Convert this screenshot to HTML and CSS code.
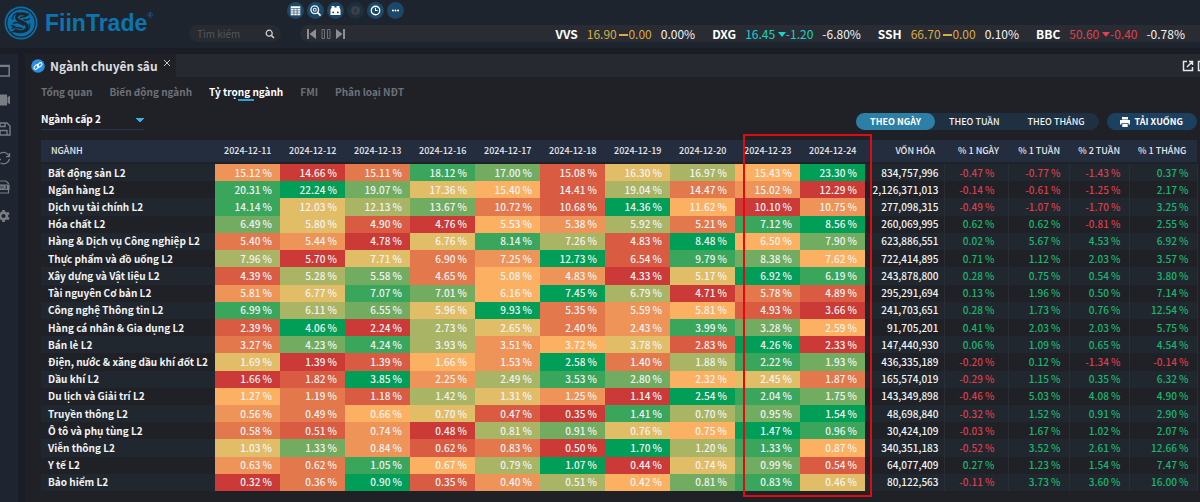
FILE: index.html
```html
<!DOCTYPE html>
<html lang="vi">
<head>
<meta charset="utf-8">
<meta name="viewport" content="width=device-width, initial-scale=1">
<title>FiinTrade - Ngành chuyên sâu</title>
<link rel="stylesheet" href="styles.css">
</head>
<body>
<header class="topbar">
  <a class="brand" href="#" aria-label="FiinTrade">
    <svg class="brand-mark" viewBox="0 0 34 34" aria-hidden="true">
      <circle cx="17" cy="17" r="16.5" fill="#0971aa"/>
      <circle cx="17" cy="17" r="14.2" fill="none" stroke="#1e242d" stroke-width="1.2"/>
      <g fill="none" stroke="#1e242d" stroke-linecap="round" stroke-linejoin="round">
        <path stroke-width="3" d="M22 8.500c-3.500-1.500-9-1-9.500 2.500-.4 3 3 4 5.500 5 3.500 1.500 6.500 3.500 4.500 7-2 3-7 3-11 1.500"/>
        <path stroke-width="1.500" d="M24.500 8c-1.500 3-5 2.500-8 3.500M8.500 13c0-3.500 2.500-6 6-6M9.500 17.500c3-2.500 7 0 10 1.500M8 22.500c2.500-2 7-.5 10 0M25.500 18c1 4-2 8-6.500 8M8 26c3-2 7 2 11 0M20 13.500c2 1 4 .5 5.500-1M7.500 19.500l3 1"/>
      </g>
    </svg>
    <span class="brand-name">FiinTrade</span><span class="brand-reg">®</span>
  </a>
  <div class="topbar-body">
    <nav class="tools" aria-label="Công cụ">
      <button class="tool" type="button" aria-label="Bảng giá"><svg viewBox="0 0 16 16"><path fill="#fff" d="M3.500 4h9v8.500h-9z"/><path stroke="#1c4766" stroke-width=".6" d="M3.500 6.200h9M3.500 8.300h9M3.500 10.400h9M6.500 6v6.500M9.500 6v6.500"/></svg></button>
      <button class="tool" type="button" aria-label="Tìm cổ phiếu"><svg viewBox="0 0 16 16" fill="none" stroke="#e8f0f6"><circle cx="7.300" cy="7.300" r="3.600" stroke-width="1.300"/><circle cx="7.300" cy="7.300" r="1.400"/><path stroke-width="1.800" d="m10 10 2.800 2.800"/></svg></button>
      <button class="tool" type="button" aria-label="Quan sát"><svg viewBox="0 0 16 16"><path fill="#fff" d="M4.300 3.800h2.700v1.400h2V3.800h2.700v1.500l1 1.700v5.200H3.300V7l1-1.700z"/><circle cx="5.800" cy="9.800" r=".9" fill="#1c4766"/><circle cx="10.200" cy="9.800" r=".9" fill="#1c4766"/></svg></button>
      <button class="tool tool-off" type="button" disabled aria-label="Thông báo"><svg viewBox="0 0 16 16"><circle cx="8" cy="8" r="4.200" fill="#3c4148"/><path stroke="#26303b" d="M8 5.500v5M6.500 8h3"/></svg></button>
      <button class="tool" type="button" aria-label="Lịch sử"><svg viewBox="0 0 16 16" fill="none" stroke="#fff"><circle cx="8" cy="8" r="4" stroke-width="1.200"/><path d="M8 5.500V8h2"/></svg></button>
      <button class="tool" type="button" aria-label="Thêm"><svg viewBox="0 0 16 16" fill="#fff"><circle cx="5.600" cy="8" r=".9"/><circle cx="8" cy="8" r=".9"/><circle cx="10.400" cy="8" r=".9"/></svg></button>
    </nav>
    <div class="topbar-line">
      <form class="search" role="search">
        <input class="search-input" type="search" placeholder="Tìm kiếm" aria-label="Tìm kiếm">
        <button class="bare" type="button" aria-label="Tìm"><svg width="10" height="10" viewBox="0 0 10 10" fill="none" stroke="#d8dadd"><circle cx="4.200" cy="4.200" r="3" stroke-width="1.200"/><path stroke-width="1.500" d="m6.500 6.500 2.500 2.500"/></svg></button>
      </form>
      <div class="ticker">
        <button class="bare" type="button" aria-label="Trước"><svg width="10" height="10" viewBox="0 0 10 10" fill="#8b8e93"><path d="M1 0h2v10H1zM10 0v10L3.500 5z"/></svg></button>
        <button class="bare" type="button" aria-label="Tạm dừng"><svg width="10" height="10" viewBox="0 0 10 10" fill="none" stroke="#6f7277"><path d="M1 .5h2.500v9H1zM6.500 .5H9v9H6.500z"/></svg></button>
        <button class="bare" type="button" aria-label="Sau"><svg width="10" height="10" viewBox="0 0 10 10" fill="#8b8e93"><path d="M0 0v10l6.500-5zM7 0h2v10H7z"/></svg></button>
        <ul class="quotes">
          <li class="quote"><b class="symbol">VVS</b><span class="flat">16.90 <i class="dash"></i>0.00</span><span>0.00%</span></li>
          <li class="quote"><b class="symbol">DXG</b><span class="floor">16.45 <i class="drop"></i>-1.20</span><span>-6.80%</span></li>
          <li class="quote"><b class="symbol">SSH</b><span class="flat">66.70 <i class="dash"></i>0.00</span><span>0.10%</span></li>
          <li class="quote"><b class="symbol">BBC</b><span class="loss">50.60 <i class="drop"></i>-0.40</span><span>-0.78%</span></li>
        </ul>
      </div>
    </div>
  </div>
</header>
<div class="workspace">
  <aside class="rail">
    <button class="bare" type="button" aria-label="Cửa sổ"><svg width="12" height="14" viewBox="0 0 12 14" fill="none" stroke="#7a7d83"><path stroke-width="1.500" d="M-4 1.500H9.200v10.500H-4z"/><path stroke-width="2" d="M-4 2h13"/></svg></button>
    <button class="bare" type="button" aria-label="Video"><svg width="12" height="14" viewBox="0 0 12 14" fill="#7a7d83"><path d="M0 1.500h7v11H0zM7.500 4 10 3v8L7.500 10z"/></svg></button>
    <button class="bare" type="button" aria-label="Lưu"><svg width="12" height="14" viewBox="0 0 12 14" fill="none" stroke="#7a7d83" stroke-width="1.400"><path d="M-4 1H7l3 3v9H-4zM0 1v3.500h5V1M0 13V8.500h7V13"/></svg></button>
    <button class="bare" type="button" aria-label="Làm mới"><svg width="12" height="14" viewBox="0 0 12 14" fill="none" stroke="#7a7d83" stroke-width="1.300"><path d="M0 2.500c4-2.500 8-.5 9 3M9.500 2v3.700H6M9.500 8c-1 4-5 6-9 4M-2 8.500h3"/></svg></button>
    <button class="bare" type="button" aria-label="Xuất tệp"><svg width="12" height="14" viewBox="0 0 12 14" fill="none" stroke="#7a7d83" stroke-width="1.200"><path d="M-3 4V1h9l2.500 2.500V4M-3 10v3H8.500v-3"/><path fill="#7a7d83" d="M-3 5H9v4.500H-3z"/><path stroke="#1e2530" stroke-width=".8" d="M1 6v2.500M3 6v2.500M5 6h1.500v2.500H5"/></svg></button>
    <button class="bare" type="button" aria-label="Cài đặt"><svg width="12" height="14" viewBox="0 0 12 14" fill="none" stroke="#7a7d83"><circle cx="3.500" cy="7" r="3.400" stroke-width="2.600"/><path stroke-width="2.600" d="M3.500 1v2M3.500 11v2M9 4 7 5M9 10 7 9"/></svg></button>
  </aside>
  <main class="panel">
    <div class="window-tabs">
      <div class="window-tab">
        <svg class="link-icon" viewBox="0 0 14 14" fill="none" stroke="#fff" stroke-width="1.100"><circle cx="7" cy="7" r="6.800" fill="#2690e8" stroke="none"/><rect x="2.700" y="6.500" width="5.200" height="3" rx="1.500" transform="rotate(-45 5.300 8)"/><rect x="6.100" y="4.500" width="5.200" height="3" rx="1.500" transform="rotate(-45 8.700 6)"/></svg>
        <h1 class="window-title">Ngành chuyên sâu</h1>
        <button class="bare close" type="button" aria-label="Đóng"><svg width="8" height="8" viewBox="0 0 8 8" stroke="#c2c4c8"><path d="m1 1 6 6M7 1 1 7"/></svg></button>
      </div>
      <div class="window-actions">
        <button class="bare" type="button" aria-label="Mở cửa sổ mới"><svg width="12" height="12" viewBox="0 0 12 12" fill="none" stroke="#e4e5e7" stroke-width="1.500"><path d="M5 1.500H1.500v9h9V7M7 1.500h3.500V5M10 2 5 7"/></svg></button>
        <button class="bare" type="button" aria-label="Phóng to"><svg width="12" height="12" viewBox="0 0 12 12" fill="none" stroke="#e4e5e7" stroke-width="1.500"><path d="M1.500 1.500h9v9h-9z"/></svg></button>
      </div>
    </div>
    <nav class="views">
      <a class="view" href="#">Tổng quan</a>
      <a class="view" href="#">Biến động ngành</a>
      <a class="view view-on" href="#" aria-current="page">Tỷ trọng ngành</a>
      <a class="view" href="#">FMI</a>
      <a class="view" href="#">Phân loại NĐT</a>
    </nav>
    <div class="controls">
      <select class="level" aria-label="Cấp ngành"><option>Ngành cấp 2</option></select>
      <div class="controls-end">
        <div class="periods">
          <button class="period period-on" type="button">THEO NGÀY</button>
          <button class="period" type="button">THEO TUẦN</button>
          <button class="period" type="button">THEO THÁNG</button>
        </div>
        <button class="download" type="button"><svg width="12" height="12" viewBox="0 0 12 12" fill="#fff"><path d="M3 1h6v2.500H3zM1 4h10v4.500H9.500V7h-7v1.500H1zM3.300 7.800h5.400V11H3.300z"/></svg>TẢI XUỐNG</button>
      </div>
    </div>
    <div class="sheet">
      <table class="weights">
        <colgroup><col class="c-name"><col span="10" class="c-day"><col class="c-cap"><col class="c-d1"><col class="c-w1"><col class="c-w2"><col class="c-m1"></colgroup>
        <thead><tr>
          <th class="name">NGÀNH</th>
          <th>2024-12-11</th><th>2024-12-12</th><th>2024-12-13</th><th>2024-12-16</th><th>2024-12-17</th><th>2024-12-18</th><th>2024-12-19</th><th>2024-12-20</th><th>2024-12-23</th><th>2024-12-24</th>
          <th>VỐN HÓA</th><th>% 1 NGÀY</th><th>% 1 TUẦN</th><th>% 2 TUẦN</th><th class="last">% 1 THÁNG</th>
        </tr></thead>
        <tbody id="rows"></tbody>
      </table>
      <div class="marker"></div>
    </div>
  </main>
</div>
<script src="table.js"></script>
</body>
</html>
```

FILE: styles.css
```css
* { box-sizing: border-box; }
body {
  margin: 0;
  height: 100vh;
  overflow: hidden;
  display: flex;
  flex-direction: column;
  background: #1a1d26;
  color: #f2f3f5;
  font: 10px/16px "Noto Sans CJK SC", "Noto Sans", sans-serif;
}
button, input, select { font: inherit; color: inherit; }
svg { display: block; }
.bare { padding: 0; border: 0; background: none; }

.topbar { display: flex; height: 48px; flex: none; background: #1e242d; }
.brand {
  display: flex;
  align-items: center;
  width: 189px;
  padding: 0 0 3px 4px;
  color: #0c75ad;
  text-decoration: none;
  font-family: "Liberation Sans", Arial, sans-serif;
}
.brand-mark { width: 34px; height: 34px; margin-right: 7px; }
.brand-name { font-size: 23px; line-height: 32px; font-weight: 700; }
.brand-reg { align-self: flex-start; padding-top: 8px; font-size: 8px; line-height: 16px; }
.topbar-body { flex: 1; min-width: 0; padding-top: 2px; }
.tools { display: flex; gap: 3px; padding-left: 98px; }
.tool {
  width: 17px;
  height: 17px;
  padding: 0;
  border: 0;
  border-radius: 50%;
  background: #1c4766;
}
.tool-off { background: #1d3041; }
.topbar-line { display: flex; gap: 19px; padding-top: 6px; }
.search {
  display: flex;
  align-items: center;
  width: 92px;
  height: 17px;
  margin: 0;
  padding: 0 6px 0 8px;
  border-radius: 9px;
  background: #272a30;
}
.search-input {
  flex: 1;
  min-width: 0;
  padding: 0;
  border: 0;
  background: none;
  line-height: 16px;
}
.search-input::placeholder { color: #54575c; opacity: 1; }
.ticker {
  display: flex;
  flex: 1;
  align-items: center;
  gap: 5px;
  height: 17px;
  padding: 0 15px 0 6px;
  border-radius: 9px 0 0 9px;
  background: #292c32;
}
.quotes { display: flex; gap: 17px; margin: 0 0 0 auto; padding: 0; list-style: none; font-size: 12px; }
.quote { display: flex; gap: 9px; white-space: nowrap; }
.symbol { color: #fff; }
.flat { color: #d9ad45; }
.floor { color: #16d3cf; }
.loss { color: #e0404f; }
.dash { display: inline-block; width: 9px; height: 2px; margin-bottom: 3px; background: currentColor; }
.drop {
  display: inline-block;
  margin-bottom: 2px;
  border: 4px solid transparent;
  border-top: 5px solid currentColor;
  border-bottom: 0;
}

.workspace { display: flex; flex: 1; min-height: 0; padding-top: 6px; }
.rail {
  display: flex;
  flex-direction: column;
  gap: 15px;
  width: 18px;
  padding-top: 10px;
  background: #1e2530;
}
.panel { flex: 1; min-width: 0; margin-left: 7px; background: #1f2127; }
.window-tabs { display: flex; justify-content: space-between; height: 23px; background: #262930; }
.window-tab {
  display: flex;
  align-items: center;
  gap: 5px;
  padding: 0 5px 0 6px;
  background: #1f2127;
}
.link-icon { width: 14px; height: 14px; }
.window-title { margin: 0; font-size: 12px; line-height: 20px; font-weight: 700; color: #dcdde0; }
.close { align-self: flex-start; padding-top: 5px; }
.window-actions { display: flex; align-items: center; gap: 3px; width: 18px; overflow: hidden; }
.window-actions .bare { flex: none; }
.views { display: flex; gap: 17px; padding: 6px 16px 0; }
.view {
  position: relative;
  color: #6d7077;
  line-height: 18px;
  font-weight: 700;
  text-decoration: none;
}
.view-on { color: #fff; }
.view-on::after {
  content: "";
  position: absolute;
  left: 50%;
  bottom: 0;
  width: 16px;
  height: 2px;
  margin-left: -8px;
  background: #2d9fd0;
}
.controls { display: flex; justify-content: space-between; padding: 9px 3px 0 16px; }
.level {
  width: 103px;
  height: 20px;
  padding: 0 0 2px;
  border: 0;
  border-bottom: 1px solid #22374c;
  border-radius: 0;
  appearance: none;
  background:
    linear-gradient(45deg, transparent 50%, #35b3e6 50%) 95px 8px / 4px 4px no-repeat,
    linear-gradient(-45deg, transparent 50%, #35b3e6 50%) 99px 8px / 4px 4px no-repeat;
  color: #fff;
  line-height: 16px;
  font-weight: 700;
}
.controls-end { display: flex; gap: 8px; padding-top: 3px; }
.periods { display: flex; border-radius: 9px; background: #1e3041; }
.period {
  height: 17px;
  padding: 0 14px;
  border: 0;
  border-radius: 9px;
  background: none;
  font-size: 9px;
  line-height: 17px;
  font-weight: 500;
}
.period-on { background: #2d7fa6; color: #fff; font-weight: 700; }
.download {
  display: flex;
  align-items: center;
  gap: 4px;
  height: 17px;
  padding: 0 14px 0 12px;
  border: 0;
  border-radius: 9px;
  background: #1c4160;
  color: #fff;
  font-size: 9px;
  line-height: 17px;
  font-weight: 700;
}

.sheet { position: relative; margin: 10px 3px 0 16px; }
.weights {
  width: 100%;
  height: calc(100vh - 151px);
  border-collapse: collapse;
  table-layout: fixed;
}
.c-name { width: 174px; }
.c-day { width: 65px; }
.c-cap { width: 79px; }
.c-d1 { width: 64px; }
.c-w1 { width: 61px; }
.c-w2 { width: 60px; }
.c-m1 { width: 68px; }
.weights th {
  height: 23px;
  padding: 0 9px;
  border-bottom: 2px solid #1f2127;
  background: #242d3e;
  color: #e6e8ec;
  font-size: 9px;
  font-weight: 500;
  text-align: right;
  white-space: nowrap;
}
.weights th.name { padding-left: 10px; text-align: left; }
.weights th.last { padding-right: 12px; }
.weights td { padding: 0 8px; font-weight: 500; text-align: right; white-space: nowrap; }
.weights tbody tr:nth-child(odd) { background: #21272e; }
.weights tbody .name { padding: 0 7px; text-align: left; font-weight: 700; }
.weights .cap { padding: 0 5px 0 0; }
.weights .change { border-right: 1px solid #292d35; }
.weights .day-change { padding-right: 13px; }
.up { color: #18b871; }
.down { color: #d5404d; }
.h0 { background: #cb3a36; }
.h1 { background: #d85b42; }
.h2 { background: #e2784c; }
.h3 { background: #ee9458; }
.h4 { background: #fbb161; }
.h5 { background: #e2bd67; }
.h6 { background: #a9b564; }
.h7 { background: #72ac61; }
.h8 { background: #3aa65c; }
.h9 { background: #019e58; }
.marker {
  position: absolute;
  top: -6px;
  bottom: -6px;
  left: 702px;
  width: 129px;
  border: 2px solid #e00b10;
  pointer-events: none;
}
```

FILE: table.js
```js
// name | ten daily weights | market cap | 1 day, 1 week, 2 weeks, 1 month
const data = `Bất động sản L2|15.12 14.66 15.11 18.12 17.00 15.08 16.30 16.97 15.43 23.30|834,757,996|-0.47 -0.77 -1.43 0.37
Ngân hàng L2|20.31 22.24 19.07 17.36 15.40 14.41 19.04 14.47 15.02 12.29|2,126,371,013|-0.14 -0.61 -1.25 2.17
Dịch vụ tài chính L2|14.14 12.03 12.13 13.67 10.72 10.68 14.36 11.62 10.10 10.75|277,098,315|-0.49 -1.07 -1.70 3.25
Hóa chất L2|6.49 5.80 4.90 4.76 5.53 5.38 5.92 5.21 7.12 8.56|260,069,995|0.62 0.62 -0.81 2.55
Hàng & Dịch vụ Công nghiệp L2|5.40 5.44 4.78 6.76 8.14 7.26 4.83 8.48 6.50 7.90|623,886,551|0.02 5.67 4.53 6.92
Thực phẩm và đồ uống L2|7.96 5.70 7.71 6.90 7.25 12.73 6.54 9.79 8.38 7.62|722,414,895|0.71 1.12 2.03 3.57
Xây dựng và Vật liệu L2|4.39 5.28 5.58 4.65 5.08 4.83 4.33 5.17 6.92 6.19|243,878,800|0.28 0.75 0.54 3.80
Tài nguyên Cơ bản L2|5.81 6.77 7.07 7.01 6.16 7.45 6.79 4.71 5.78 4.89|295,291,694|0.13 1.96 0.50 7.14
Công nghệ Thông tin L2|6.99 6.11 6.55 5.96 9.93 5.35 5.59 5.81 4.93 3.66|241,703,651|0.28 1.73 0.76 12.54
Hàng cá nhân & Gia dụng L2|2.39 4.06 2.24 2.73 2.65 2.40 2.43 3.99 3.28 2.59|91,705,201|0.41 2.03 2.03 5.75
Bán lẻ L2|3.27 4.23 4.24 3.93 3.51 3.72 3.78 2.83 4.26 2.33|147,440,930|0.06 1.09 0.65 4.54
Điện, nước & xăng dầu khí đốt L2|1.69 1.39 1.39 1.66 1.53 2.58 1.40 1.88 2.22 1.93|436,335,189|-0.20 0.12 -1.34 -0.14
Dầu khí L2|1.66 1.82 3.85 2.25 2.49 3.53 2.80 2.32 2.45 1.87|165,574,019|-0.29 1.15 0.35 6.32
Du lịch và Giải trí L2|1.27 1.19 1.18 1.42 1.31 1.25 1.14 2.54 2.04 1.75|143,349,898|-0.46 5.03 4.08 4.90
Truyền thông L2|0.56 0.49 0.66 0.70 0.47 0.35 1.41 0.70 0.95 1.54|48,698,840|-0.32 1.52 0.91 2.90
Ô tô và phụ tùng L2|0.58 0.51 0.74 0.48 0.81 0.91 0.76 0.75 1.47 0.96|30,424,109|-0.03 1.67 1.02 2.07
Viễn thông L2|1.03 1.33 0.84 0.62 0.83 0.50 1.70 1.20 1.33 0.87|340,351,183|-0.52 3.52 2.61 12.66
Y tế L2|0.63 0.62 1.05 0.67 0.79 1.07 0.44 0.74 0.99 0.54|64,077,409|0.27 1.23 1.54 7.47
Bảo hiểm L2|0.32 0.36 0.90 0.35 0.40 0.51 0.42 0.81 0.83 0.46|80,122,563|-0.11 3.73 3.60 16.00`;

// Each daily cell is coloured by its rank inside its own row.
document.getElementById("rows").innerHTML = data.split("\n").map(line => {
  const [name, days, cap, changes] = line.split("|");
  const values = days.split(" ");
  const order = values.map((v, i) => i).sort((a, b) => values[a] - values[b] || a - b);
  const heat = values.map((v, i) => `<td class="h${order.indexOf(i)}">${v} %</td>`).join("");
  const moves = changes.split(" ").map((v, i) =>
    `<td class="change ${v < 0 ? "down" : "up"}${i ? "" : " day-change"}">${v} %</td>`).join("");
  return `<tr><td class="name">${name}</td>${heat}<td class="cap change">${cap}</td>${moves}</tr>`;
}).join("");
```
